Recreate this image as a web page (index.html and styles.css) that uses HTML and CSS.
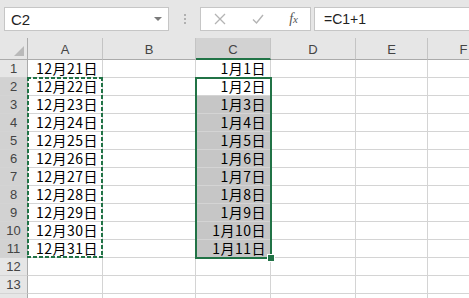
FILE: index.html
```html
<!DOCTYPE html>
<html lang="ja">
<head>
    <meta charset="UTF-8">
    <title>Sheet</title>
    <link rel="stylesheet" href="styles.css">
</head>
<body>
    <!-- Formula bar -->
    <div class="formula-bar">
        <div class="name-box">
            <span>C2</span>
            <span class="drop"></span>
        </div>
        <div class="grip"><i></i><i></i><i></i></div>
        <div class="fx-buttons">
            <svg class="btn-icon" width="12" height="12" viewBox="0 0 12 12"><path d="M1 1 L11 11 M11 1 L1 11" stroke="#b4b4b4" stroke-width="1.3" fill="none"/></svg>
            <svg class="btn-icon" width="12" height="12" viewBox="0 0 12 12"><path d="M1 6.5 L4.5 10 L11 2" stroke="#b4b4b4" stroke-width="1.4" fill="none"/></svg>
            <span class="fx">f<small>x</small></span>
        </div>
        <div class="formula">=C1+1</div>
    </div>

    <!-- Sheet -->
    <div class="sheet">
        <div class="row head-row">
            <div class="corner"><span class="tri"></span></div>
            <div class="col-head">A</div>
            <div class="col-head">B</div>
            <div class="col-head active">C</div>
            <div class="col-head">D</div>
            <div class="col-head">E</div>
            <div class="col-head">F</div>
        </div>

        <div class="row">
            <div class="row-head">1</div>
            <div class="cell">12月21日</div>
            <div class="cell"></div>
            <div class="cell">1月1日</div>
            <div class="cell"></div><div class="cell"></div><div class="cell"></div>
        </div>
        <div class="row">
            <div class="row-head sel">2</div>
            <div class="cell anchor">12月22日<div class="copy-range"></div></div>
            <div class="cell"></div>
            <div class="cell anchor">1月2日<div class="sel-range"><span class="handle"></span></div></div>
            <div class="cell"></div><div class="cell"></div><div class="cell"></div>
        </div>
        <div class="row">
            <div class="row-head sel">3</div>
            <div class="cell">12月23日</div>
            <div class="cell"></div>
            <div class="cell picked">1月3日</div>
            <div class="cell"></div><div class="cell"></div><div class="cell"></div>
        </div>
        <div class="row">
            <div class="row-head sel">4</div>
            <div class="cell">12月24日</div>
            <div class="cell"></div>
            <div class="cell picked">1月4日</div>
            <div class="cell"></div><div class="cell"></div><div class="cell"></div>
        </div>
        <div class="row">
            <div class="row-head sel">5</div>
            <div class="cell">12月25日</div>
            <div class="cell"></div>
            <div class="cell picked">1月5日</div>
            <div class="cell"></div><div class="cell"></div><div class="cell"></div>
        </div>
        <div class="row">
            <div class="row-head sel">6</div>
            <div class="cell">12月26日</div>
            <div class="cell"></div>
            <div class="cell picked">1月6日</div>
            <div class="cell"></div><div class="cell"></div><div class="cell"></div>
        </div>
        <div class="row">
            <div class="row-head sel">7</div>
            <div class="cell">12月27日</div>
            <div class="cell"></div>
            <div class="cell picked">1月7日</div>
            <div class="cell"></div><div class="cell"></div><div class="cell"></div>
        </div>
        <div class="row">
            <div class="row-head sel">8</div>
            <div class="cell">12月28日</div>
            <div class="cell"></div>
            <div class="cell picked">1月8日</div>
            <div class="cell"></div><div class="cell"></div><div class="cell"></div>
        </div>
        <div class="row">
            <div class="row-head sel">9</div>
            <div class="cell">12月29日</div>
            <div class="cell"></div>
            <div class="cell picked">1月9日</div>
            <div class="cell"></div><div class="cell"></div><div class="cell"></div>
        </div>
        <div class="row">
            <div class="row-head sel">10</div>
            <div class="cell">12月30日</div>
            <div class="cell"></div>
            <div class="cell picked">1月10日</div>
            <div class="cell"></div><div class="cell"></div><div class="cell"></div>
        </div>
        <div class="row">
            <div class="row-head sel">11</div>
            <div class="cell">12月31日</div>
            <div class="cell"></div>
            <div class="cell picked">1月11日</div>
            <div class="cell"></div><div class="cell"></div><div class="cell"></div>
        </div>
        <div class="row">
            <div class="row-head">12</div>
            <div class="cell"></div><div class="cell"></div><div class="cell"></div>
            <div class="cell"></div><div class="cell"></div><div class="cell"></div>
        </div>
        <div class="row">
            <div class="row-head">13</div>
            <div class="cell"></div><div class="cell"></div><div class="cell"></div>
            <div class="cell"></div><div class="cell"></div><div class="cell"></div>
        </div>
        <div class="row">
            <div class="row-head"></div>
            <div class="cell"></div><div class="cell"></div><div class="cell"></div>
            <div class="cell"></div><div class="cell"></div><div class="cell"></div>
        </div>
    </div>
</body>
</html>
```

FILE: styles.css
```css
body {
    margin: 0;
    width: 469px;
    height: 298px;
    overflow: hidden;
    background: #ffffff;
    font-family: 'Liberation Sans', Arial, sans-serif;
}

/* Formula bar */
.formula-bar {
    display: flex;
    align-items: center;
    height: 38px;
    padding: 0 0 0 4px;
    background: #e6e6e6;
    box-sizing: border-box;
}

.name-box,
.fx-buttons,
.formula {
    height: 24px;
    background: #ffffff;
    border: 1px solid #c6c6c6;
    box-sizing: border-box;
    display: flex;
    align-items: center;
}

.name-box {
    width: 165px;
    padding: 0 6px 0 6px;
    justify-content: space-between;
    font-size: 15px;
    color: #222;
}

.drop {
    width: 0;
    height: 0;
    border-left: 4px solid transparent;
    border-right: 4px solid transparent;
    border-top: 4px solid #7a7a7a;
}

.grip {
    width: 31px;
    display: flex;
    flex-direction: column;
    align-items: center;
    gap: 2px;
}

.grip i {
    width: 2px;
    height: 2px;
    background: #b0b0b0;
}

.fx-buttons {
    width: 111px;
    padding: 0 12px 0 13px;
    justify-content: space-between;
}

.fx {
    font-family: 'Liberation Serif', serif;
    font-style: italic;
    font-size: 14px;
    color: #555;
}

.fx small {
    font-size: 11px;
}

.formula {
    flex: 1;
    margin-left: 3px;
    border-right: none;
    padding-left: 9px;
    font-size: 14px;
    color: #222;
}

/* Sheet grid */
.row {
    display: grid;
    grid-template-columns: 28px 75px 93px 75px 85px 72px 72px;
    height: 18px;
}

.head-row {
    height: 22px;
    background: #e6e6e6;
}

.corner,
.col-head {
    border-right: 1px solid #c4c4c4;
    border-bottom: 1px solid #ababab;
    box-sizing: border-box;
}

.corner {
    display: flex;
    justify-content: flex-end;
    align-items: flex-end;
    padding: 0 3px 3px 0;
    border-right-color: #ababab;
}

.tri {
    width: 10px;
    height: 10px;
    background: #b9b9b9;
    clip-path: polygon(100% 0, 100% 100%, 0 100%);
}

.col-head {
    display: flex;
    align-items: center;
    justify-content: center;
    padding-top: 2px;
    font-size: 13px;
    color: #444;
}

.col-head.active {
    background: #d2d2d2;
    border-bottom: 2px solid #217346;
}

.row-head {
    display: flex;
    align-items: center;
    justify-content: center;
    background: #e6e6e6;
    border-right: 1px solid #ababab;
    border-bottom: 1px solid #d4d4d4;
    box-sizing: border-box;
    font-size: 13px;
    line-height: 15px;
    color: #444;
}

.row-head.sel {
    background: #d2d2d2;
}

.cell {
    border-right: 1px solid #d4d4d4;
    border-bottom: 1px solid #d4d4d4;
    box-sizing: border-box;
    text-align: right;
    padding-right: 4px;
    font-family: 'Noto Sans CJK JP', sans-serif;
    font-size: 14px;
    line-height: 17px;
    letter-spacing: 0.5px;
    color: #000;
    white-space: nowrap;
}

.cell.picked {
    background: #c6c6c6;
}

.cell.anchor {
    position: relative;
}

/* Selection overlays */
.sel-range {
    position: absolute;
    top: -1px;
    left: -1px;
    width: 77px;
    height: 182px;
    border: 2px solid #217346;
    box-sizing: border-box;
    z-index: 2;
}

.handle {
    position: absolute;
    right: -5px;
    bottom: -5px;
    width: 6px;
    height: 6px;
    background: #217346;
    border: 1px solid #ffffff;
}

.copy-range {
    position: absolute;
    top: -1px;
    left: -1px;
    width: 76px;
    height: 181px;
    z-index: 2;
    background:
        repeating-linear-gradient(90deg, #217346 0 4px, transparent 4px 6px) top / 100% 2px no-repeat,
        repeating-linear-gradient(90deg, #217346 0 4px, transparent 4px 6px) bottom / 100% 2px no-repeat,
        repeating-linear-gradient(180deg, #217346 0 4px, transparent 4px 6px) left / 2px 100% no-repeat,
        repeating-linear-gradient(180deg, #217346 0 4px, transparent 4px 6px) right / 2px 100% no-repeat;
}
```
